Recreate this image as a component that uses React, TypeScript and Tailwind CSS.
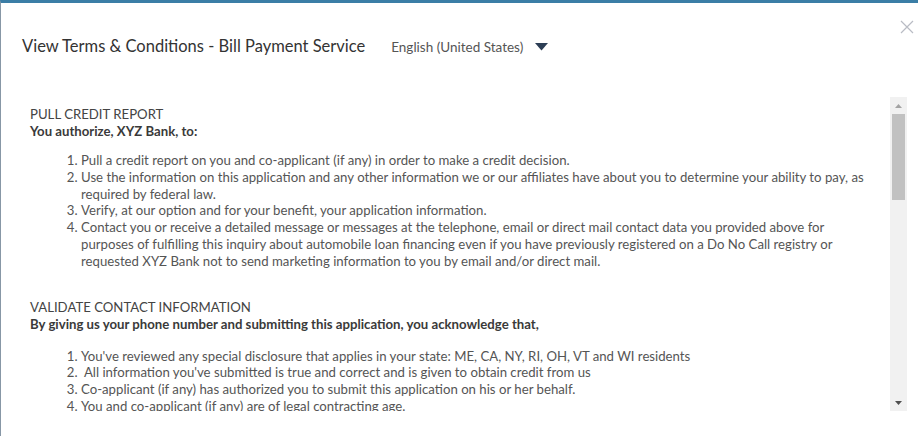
import React from 'react'

const creditItems = [
  'Pull a credit report on you and co-applicant (if any) in order to make a credit decision.',
  'Use the information on this application and any other information we or our affiliates have about you to determine your ability to pay, as required by federal law.',
  'Verify, at our option and for your benefit, your application information.',
  'Contact you or receive a detailed message or messages at the telephone, email or direct mail contact data you provided above for purposes of fulfilling this inquiry about automobile loan financing even if you have previously registered on a Do No Call registry or requested XYZ Bank not to send marketing information to you by email and/or direct mail.',
]

const contactItems = [
  "You've reviewed any special disclosure that applies in your state: ME, CA, NY, RI, OH, VT and WI residents",
  "\u00a0All information you've submitted is true and correct and is given to obtain credit from us",
  'Co-applicant (if any) has authorized you to submit this application on his or her behalf.',
  'You and co-applicant (if any) are of legal contracting age.',
]

function Section({ title, lead, items, wide }: { title: string; lead: string; items: string[]; wide?: boolean }) {
  return (
    <section className="mb-[29px]">
      <h3 className="text-[13.2px] leading-[17px] text-[#444]">{title}</h3>
      <p className="text-[13.2px] leading-[17px] font-bold text-[#3a3a3a]">{lead}</p>
      <ol
        className={`list-decimal pl-[51px] text-[13.2px] leading-[16.8px] text-[#555] ${wide ? 'mt-[15px]' : 'mt-[12px]'}`}
      >
        {items.map((t, i) => (
          <li key={i}>{t}</li>
        ))}
      </ol>
    </section>
  )
}

export default function App() {
  return (
    <div
      className="w-[918px] h-[436px] bg-white border-t-[3px] border-t-[#3b7ea6] border-l border-l-[#8797a6] flex flex-col overflow-hidden"
      style={{ fontFamily: 'Lato, "Open Sans", sans-serif' }}
    >
      <header className="relative h-[94px] flex items-start pt-[33px] pl-[21px]">
        <h2 className="text-[16.5px] leading-[20px] text-[#333]">View Terms &amp; Conditions - Bill Payment Service</h2>
        <button className="ml-[26px] mt-[2px] flex items-center text-[13.5px] leading-[18px] text-[#555]">
          English (United States)
          <svg width="13" height="8" viewBox="0 0 13 8" className="ml-[12px]">
            <path d="M0 0h13L6.5 7.5z" fill="#2c3e55" />
          </svg>
        </button>
        <button className="absolute right-[4px] top-[17px] text-[#b9bcc4]" aria-label="Close">
          <svg width="14" height="14" viewBox="0 0 14 14">
            <path d="M1 1l12 12M13 1L1 13" stroke="currentColor" strokeWidth="1.2" />
          </svg>
        </button>
      </header>

      <div className="flex h-[314px] pr-[11px]">
        <div className="flex-1 overflow-hidden pl-[29px] pt-[9px] pr-[14px]">
          <Section title="PULL CREDIT REPORT" lead="You authorize, XYZ Bank, to:" items={creditItems} />
          <Section
            title="VALIDATE CONTACT INFORMATION"
            lead="By giving us your phone number and submitting this application, you acknowledge that,"
            items={contactItems}
            wide
          />
        </div>
        <div className="w-[17px] bg-[#f1f1f1] flex flex-col items-center">
          <div className="h-[17px] flex items-center justify-center">
            <svg width="7" height="4" viewBox="0 0 7 4">
              <path d="M0 4h7L3.5 0z" fill="#a3a3a3" />
            </svg>
          </div>
          <div className="w-[13px] h-[86px] bg-[#c1c1c1]" />
          <div className="flex-1" />
          <div className="h-[17px] flex items-center justify-center">
            <svg width="7" height="4" viewBox="0 0 7 4">
              <path d="M0 0h7L3.5 4z" fill="#505050" />
            </svg>
          </div>
        </div>
      </div>
    </div>
  )
}
